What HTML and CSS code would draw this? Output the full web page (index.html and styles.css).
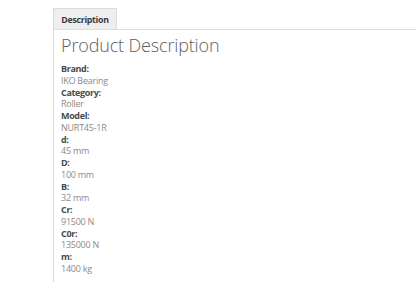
FILE: index.html
```html
<!DOCTYPE html>
<html>
<head>
<meta charset="utf-8">
<link rel="stylesheet" href="styles.css">
</head>
<body>
<div class="tabs">
  <div class="tab-bar">
    <div class="tab active">Description</div>
  </div>
  <div class="tab-panel">
    <h2 class="title">Product Description</h2>
    <dl class="specs">
      <dt>Brand:</dt><dd>IKO Bearing</dd>
      <dt>Category:</dt><dd>Roller</dd>
      <dt>Model:</dt><dd>NURT45-1R</dd>
      <dt>d:</dt><dd>45 mm</dd>
      <dt>D:</dt><dd>100 mm</dd>
      <dt>B:</dt><dd>32 mm</dd>
      <dt>Cr:</dt><dd>91500 N</dd>
      <dt>C0r:</dt><dd>135000 N</dd>
      <dt>m:</dt><dd>1400 kg</dd>
    </dl>
  </div>
</div>
</body>
</html>
```
FILE: styles.css
```css
html, body {
  margin: 0;
  padding: 0;
  background: #fff;
  font-family: "Open Sans", "Liberation Sans", sans-serif;
}
.tabs {
  padding: 8px 0 0 53px;
}
.tab-bar {
  display: flex;
}
.tab {
  box-sizing: border-box;
  width: 64px;
  height: 21px;
  border: 1px solid #dcdcdc;
  border-bottom: none;
  background: #eeeeee;
  font-size: 8.8px;
  letter-spacing: -0.3px;
  font-weight: 700;
  color: #3a3a3a;
  display: flex;
  align-items: center;
  justify-content: center;
  padding-top: 1px;
}
.tab-panel {
  border-top: 1px solid #dcdcdc;
  border-left: 1px solid #dcdcdc;
  padding: 2px 0 4px 7px;
  height: 247px;
}
.title {
  margin: 0;
  font-size: 18px;
  font-weight: 300;
  letter-spacing: -0.15px;
  color: #5e5e5e;
  line-height: 27px;
}
.specs {
  margin: 4px 0 0;
  font-size: 9px;
  letter-spacing: -0.25px;
  line-height: 11.75px;
}
.specs dt {
  font-weight: 700;
  letter-spacing: -0.35px;
  color: #4a4a4a;
}
.specs dd {
  margin: 0;
  color: #8a8a8a;
}
```
